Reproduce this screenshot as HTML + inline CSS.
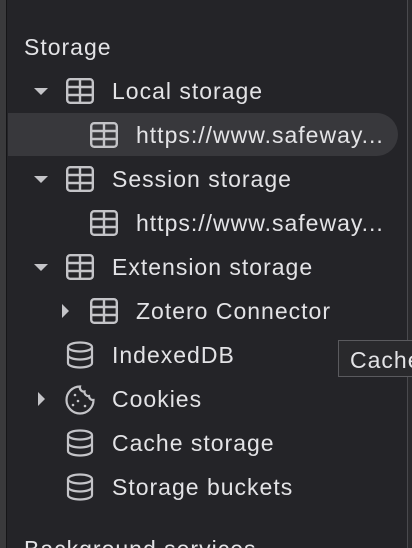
<!DOCTYPE html><html style="overflow:hidden;height:548px"><head><style>
body{margin:0;width:412px;height:548px;overflow:hidden;background:#242428;font-family:"Liberation Sans",sans-serif;color:#e3e3e6;position:relative}
.ls{position:absolute;left:0;top:0;width:6px;height:548px;background:#3a3a3c}
.ll{position:absolute;left:6px;top:0;width:1px;height:548px;background:#151517}
.rl{position:absolute;left:407px;top:0;width:5px;height:548px;background:#2a2a2d;border-left:1px solid #4a4a4e}
.row{position:absolute;left:0;height:44px;width:400px;font-size:23px;letter-spacing:1px;line-height:45px;white-space:nowrap}
.row span{position:absolute}
.sel{position:absolute;left:8px;top:113px;width:390px;height:43px;background:#38383c;border-radius:0 22px 22px 0}
svg{position:absolute}
.tip{position:absolute;left:338px;top:340px;width:80px;height:37px;background:#29292c;border:1px solid #5a5a5e;font-size:23px;letter-spacing:1px;line-height:38px;padding-left:11px;box-sizing:border-box;white-space:nowrap;overflow:hidden}
.clip{position:absolute;left:0;top:538px;width:400px;height:10px;overflow:hidden}
</style></head><body>
<div class="ls"></div><div class="ll"></div><div class="rl"></div>
<div class="sel"></div>
<svg width="0" height="0"><defs>
<g id="t"><rect x="1.2" y="1.2" width="25.6" height="23.6" rx="3" fill="none" stroke="#c4c4c8" stroke-width="2.4"/><path d="M14 1v24M1 9h26M1 17h26" stroke="#c4c4c8" stroke-width="2.4"/></g>
<g id="d" fill="none" stroke="#c4c4c8" stroke-width="2.2"><ellipse cx="14" cy="6" rx="12" ry="4.5"/><path d="M2 6v16c0 2.5 5.4 4.5 12 4.5s12-2 12-4.5V6M2 14c0 2.5 5.4 4.5 12 4.5s12-2 12-4.5"/></g>
<path id="a" d="M0 0h14l-7 7z" fill="#c4c4c8"/>
<path id="r" d="M0 0l7 7l-7 7z" fill="#c4c4c8"/>
</defs></svg>
<div class="row" style="top:25px"><span style="left:24px">Storage</span></div>
<div class="row" style="top:69px"><svg style="left:34px;top:19px" width="14" height="8"><use href="#a"/></svg><svg style="left:66px;top:9px" width="28" height="26"><use href="#t"/></svg><span style="left:112px">Local storage</span></div>
<div class="row" style="top:113px"><svg style="left:90px;top:9px" width="28" height="26"><use href="#t"/></svg><span style="left:136px">https://www.safeway...</span></div>
<div class="row" style="top:157px"><svg style="left:34px;top:19px" width="14" height="8"><use href="#a"/></svg><svg style="left:66px;top:9px" width="28" height="26"><use href="#t"/></svg><span style="left:112px">Session storage</span></div>
<div class="row" style="top:201px"><svg style="left:90px;top:9px" width="28" height="26"><use href="#t"/></svg><span style="left:136px">https://www.safeway...</span></div>
<div class="row" style="top:245px"><svg style="left:34px;top:19px" width="14" height="8"><use href="#a"/></svg><svg style="left:66px;top:9px" width="28" height="26"><use href="#t"/></svg><span style="left:112px">Extension storage</span></div>
<div class="row" style="top:289px"><svg style="left:62px;top:15px" width="8" height="14"><use href="#r"/></svg><svg style="left:90px;top:9px" width="28" height="26"><use href="#t"/></svg><span style="left:136px">Zotero Connector</span></div>
<div class="row" style="top:333px"><svg style="left:66px;top:8px" width="28" height="29"><use href="#d"/></svg><span style="left:112px">IndexedDB</span></div>
<div class="row" style="top:377px"><svg style="left:38px;top:15px" width="8" height="14"><use href="#r"/></svg><svg style="left:64px;top:7px" width="32" height="32" fill="none" stroke="#c4c4c8" stroke-width="2.2"><path d="M16 2.5a13.5 13.5 0 1 0 13.5 13.5a4 4 0 0 1-4.5-4a4 4 0 0 1-4.5-4.5a4 4 0 0 1-4.5-5z"/><circle cx="11" cy="11" r="1.3" fill="#c4c4c8" stroke="none"/><circle cx="14" cy="17" r="1.3" fill="#c4c4c8" stroke="none"/><circle cx="9" cy="21" r="1.3" fill="#c4c4c8" stroke="none"/><circle cx="21" cy="22" r="1.3" fill="#c4c4c8" stroke="none"/></svg><span style="left:112px">Cookies</span></div>
<div class="row" style="top:421px"><svg style="left:66px;top:8px" width="28" height="29"><use href="#d"/></svg><span style="left:112px">Cache storage</span></div>
<div class="row" style="top:465px"><svg style="left:66px;top:8px" width="28" height="29"><use href="#d"/></svg><span style="left:112px">Storage buckets</span></div>
<div class="clip"><div class="row" style="top:-11px"><span style="left:24px">Background services</span></div></div>
<div class="tip">Cache</div>
</body></html>
